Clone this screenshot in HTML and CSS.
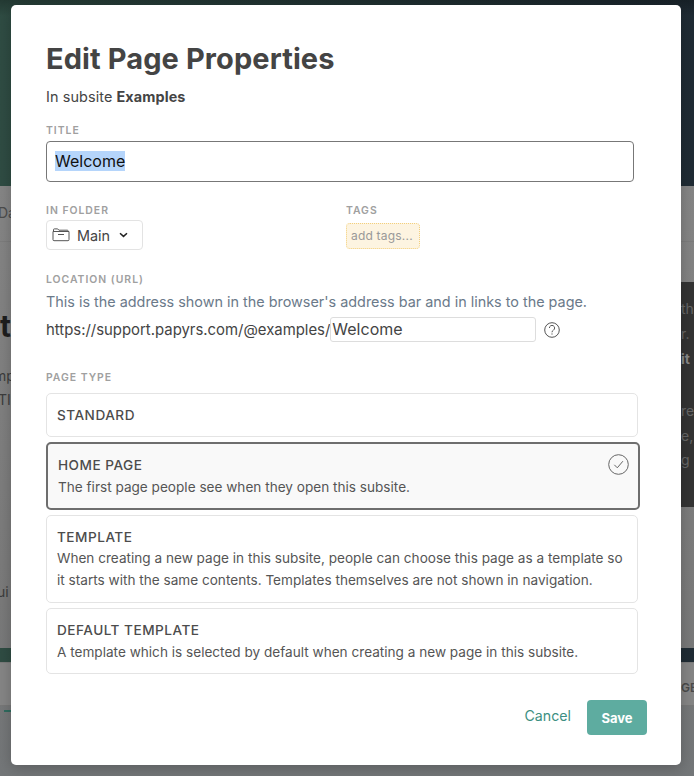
FILE: index.html
```html
<!DOCTYPE html>
<html lang="en">
<head>
<meta charset="utf-8">
<title>Edit Page Properties</title>
<link rel="stylesheet" href="styles.css">
</head>
<body>
<div class="backdrop">
  <div class="bg-hero"></div>
  <div class="bg-rule"></div>
  <div class="bg-dark"></div>
  <div class="bg-band"></div>
  <div class="bg-foot"></div>
  <span class="bg-text bg-da">Da</span>
  <span class="bg-text bg-big">t</span>
  <span class="bg-text bg-mp">mp</span>
  <span class="bg-text bg-ti">TI</span>
  <span class="bg-text bg-ui">ui</span>
  <span class="bg-text bg-dash"></span>
  <span class="bg-text bg-ge">GE</span>
  <span class="bg-dark-text bg-r1">the</span>
  <span class="bg-dark-text bg-r2">r. </span>
  <span class="bg-dark-text bg-r3">it</span>
  <span class="bg-dark-text bg-r4">res</span>
  <span class="bg-dark-text bg-r5">e,</span>
  <span class="bg-dark-text bg-r6">g</span>
</div>
<main class="modal">
  <h1 class="heading">Edit Page Properties</h1>
  <p class="subtitle">In subsite <strong>Examples</strong></p>

  <div class="label label-title">Title</div>
  <div class="title-input"><span class="selected">Welcome</span></div>

  <div class="two-col">
    <div class="col-folder">
      <div class="label">In folder</div>
      <div class="folder-select">
        <svg class="folder-icon" width="18" height="14" viewBox="0 0 18 14" fill="none" stroke="#555" stroke-width="1">
          <path d="M1 3.5h16v8.2a1 1 0 0 1-1 1H2a1 1 0 0 1-1-1z"/>
          <path d="M1.5 3.5V1.7a.8.8 0 0 1 .8-.8h3.4l1.2 1.3h8.4a.8.8 0 0 1 .8.8v.5"/>
          <path d="M6 6.5h6"/>
        </svg>
        <span class="folder-name">Main</span>
        <svg class="chev" width="9" height="6" viewBox="0 0 9 6" fill="none" stroke="#222" stroke-width="1.5">
          <path d="M1 1.2l3.5 3.2L8 1.2"/>
        </svg>
      </div>
    </div>
    <div class="col-tags">
      <div class="label">Tags</div>
      <div class="tags-box">add tags...</div>
    </div>
  </div>

  <div class="label label-location">Location (URL)</div>
  <p class="hint">This is the address shown in the browser's address bar and in links to the page.</p>
  <div class="url-row">
    <span class="url-prefix">https://support.papyrs.com/@examples/</span>
    <div class="url-input">Welcome</div>
    <svg class="help" width="16" height="16" viewBox="0 0 16 16" fill="none" stroke="#555" stroke-width="1">
      <circle cx="8" cy="8" r="7.3"/>
      <path d="M5.4 6a2.6 2.6 0 1 1 4 2.2c-.9.6-1.4 1-1.4 2.1"/>
      <path d="M8 11.4v1.2"/>
    </svg>
  </div>

  <div class="label label-type">Page type</div>
  <div class="types">
    <div class="type type-standard"><div class="type-name">Standard</div></div>
    <div class="type type-active">
      <div class="type-name">Home page</div>
      <div class="type-desc">The first page people see when they open this subsite.</div>
      <svg class="check" width="21" height="21" viewBox="0 0 21 21" fill="none" stroke="#666" stroke-width="1">
        <circle cx="10.5" cy="10.5" r="9.8"/>
        <path d="M6.3 10.8l3 3 5.6-6.6"/>
      </svg>
    </div>
    <div class="type type-template">
      <div class="type-name">Template</div>
      <div class="type-desc">When creating a new page in this subsite, people can choose this page as a template so it starts with the same contents. Templates themselves are not shown in navigation.</div>
    </div>
    <div class="type type-default">
      <div class="type-name">Default template</div>
      <div class="type-desc">A template which is selected by default when creating a new page in this subsite.</div>
    </div>
  </div>

  <div class="actions">
    <span class="cancel">Cancel</span>
    <span class="save">Save</span>
  </div>
</main>
</body>
</html>
```
FILE: styles.css
```css
* { box-sizing: border-box; }
html, body { margin: 0; padding: 0; }
body {
  width: 694px;
  height: 776px;
  overflow: hidden;
  position: relative;
  background: #7e7e7e;
  font-family: Inter, "Liberation Sans", sans-serif;
  color: #444;
}

/* dimmed page behind the dialog */
.backdrop { position: absolute; inset: 0; overflow: hidden; background: linear-gradient(180deg, #858585 186px, #7a7a7a 600px, #737678 776px); }
.bg-hero {
  position: absolute; left: 0; top: 0; width: 694px; height: 186px;
  background: linear-gradient(180deg, rgba(0, 0, 0, 0.25), rgba(0, 0, 0, 0) 16px), linear-gradient(90deg, #2f4c43, #1f2b34);
}
.bg-rule { position: absolute; left: 0; top: 241px; width: 694px; height: 1px; background: #7c7c7c; }
.bg-dark { position: absolute; left: 681px; top: 282px; width: 13px; height: 225px; background: #333; }
.bg-band { position: absolute; left: 0; top: 648px; width: 694px; height: 14px; background: linear-gradient(90deg, #2f4c43, #1f2b34); }
.bg-foot { position: absolute; left: 0; top: 662px; width: 694px; height: 44px; background: #858585; border-top: 1px solid #7a7a7a; border-bottom: 1px solid #777; }
.bg-text { position: absolute; font-size: 14px; color: #3c3c3c; }
.bg-da { left: -2px; top: 204px; color: #4c4c4c; }
.bg-big { left: 0; top: 308px; font-size: 30px; font-weight: 700; color: #1e1e1e; }
.bg-mp { left: -6px; top: 367px; }
.bg-ti { left: -2px; top: 391px; }
.bg-ui { left: -3px; top: 583px; }
.bg-dash { left: 4px; top: 710px; width: 8px; height: 2px; background: #2f6b5f; }
.bg-ge { left: 681px; top: 680px; font-size: 12px; font-weight: 600; color: #4a4a4a; }
.bg-dark-text { position: absolute; left: 681px; font-size: 14px; color: #666; }
.bg-r1 { top: 300px; }
.bg-r2 { top: 325px; }
.bg-r3 { top: 350px; font-weight: 700; color: #888; }
.bg-r4 { top: 402px; }
.bg-r5 { top: 427px; }
.bg-r6 { top: 451px; }

/* dialog */
.modal {
  position: absolute;
  left: 11px;
  top: 5px;
  width: 670px;
  height: 760px;
  background: #fff;
  border-radius: 5px;
  box-shadow: 0 3px 14px rgba(0, 0, 0, 0.22);
  padding: 36px 35px 0;
}
.heading {
  margin: 0;
  font-size: 29px;
  line-height: 36px;
  letter-spacing: 0.1px;
  font-weight: 700;
  color: #444;
}
.subtitle {
  margin: 10px 0 0;
  font-size: 14.4px;
  line-height: 20px;
  letter-spacing: 0.1px;
  color: #444;
}
.subtitle strong { font-weight: 700; }
.label {
  font-size: 10.4px;
  line-height: 12px;
  font-weight: 600;
  letter-spacing: 1px;
  text-transform: uppercase;
  color: #a0a0a0;
}
.label-title { margin-top: 18px; }
.title-input {
  margin-top: 4px;
  width: 588px;
  height: 41px;
  border: 1px solid #777;
  border-radius: 4px;
  padding: 9px 8px;
  font-size: 16px;
  line-height: 20px;
  color: #111;
}
.selected { display: inline-block; background: #b5d5fb; }

.two-col { display: flex; margin-top: 23px; }
.col-folder { width: 300px; }
.folder-select {
  margin-top: 3px;
  display: flex;
  align-items: center;
  width: 97px;
  height: 30px;
  border: 1px solid #e3e3e3;
  border-radius: 4px;
  padding-left: 5px;
}
.folder-icon { flex: none; }
.folder-name { margin-left: 7px; font-size: 14.4px; color: #444; }
.chev { margin-left: 9px; }
.tags-box {
  margin-top: 6px;
  width: 74px;
  height: 26px;
  border: 1px dotted #f3cf7c;
  border-radius: 4px;
  background: #fdf4e1;
  font-size: 12px;
  line-height: 24px;
  padding-left: 4px;
  color: #999;
  letter-spacing: 0.2px;
}

.label-location { margin-top: 24px; }
.hint {
  margin: 6px 0 0;
  font-size: 14.4px;
  line-height: 20px;
  color: #6b7a8a;
}
.url-row { display: flex; align-items: center; margin-top: 5px; height: 25px; }
.url-prefix { font-size: 14.9px; color: #444; white-space: nowrap; }
.url-input {
  width: 206px;
  height: 25px;
  border: 1px solid #ddd;
  border-radius: 3px;
  padding-left: 1px;
  font-size: 16px;
  line-height: 23px;
  color: #444;
  white-space: nowrap;
}
.help { margin-left: 8px; }

.label-type { margin-top: 30px; }
.types { margin-top: 9px; width: 592px; display: flex; flex-direction: column; gap: 5px; }
.type {
  position: relative;
  border: 1px solid #e4e4e4;
  border-radius: 5px;
  padding: 11px 10px 0;
  background: #fff;
}
.type-name {
  font-size: 13.6px;
  line-height: 21px;
  font-weight: 500;
  letter-spacing: 0.5px;
  text-transform: uppercase;
  color: #4c4c4c;
}
.type-desc {
  font-size: 13.6px;
  line-height: 22px;
  color: #555;
}
.type-standard { height: 44px; padding-top: 11px; }
.type-active {
  width: 594px;
  height: 68px;
  border: 2px solid #6e6e6e;
  background: #f9f9f9;
  padding-top: 11px;
}
.check { position: absolute; right: 9px; top: 10px; }
.type-template { height: 88px; }
.type-template .type-desc { margin-top: -1px; }
.type-default { height: 66px; }

.actions {
  display: flex;
  align-items: center;
  justify-content: flex-end;
  margin-top: 26px;
  width: 601px;
}
.cancel { font-size: 14.2px; color: #3d8f82; margin-right: 16px; position: relative; top: -2px; }
.save {
  width: 60px;
  height: 35px;
  border-radius: 4px;
  background: #5eaca0;
  color: #fff;
  font-size: 13px;
  font-weight: 700;
  line-height: 37px;
  text-align: center;
}
```
